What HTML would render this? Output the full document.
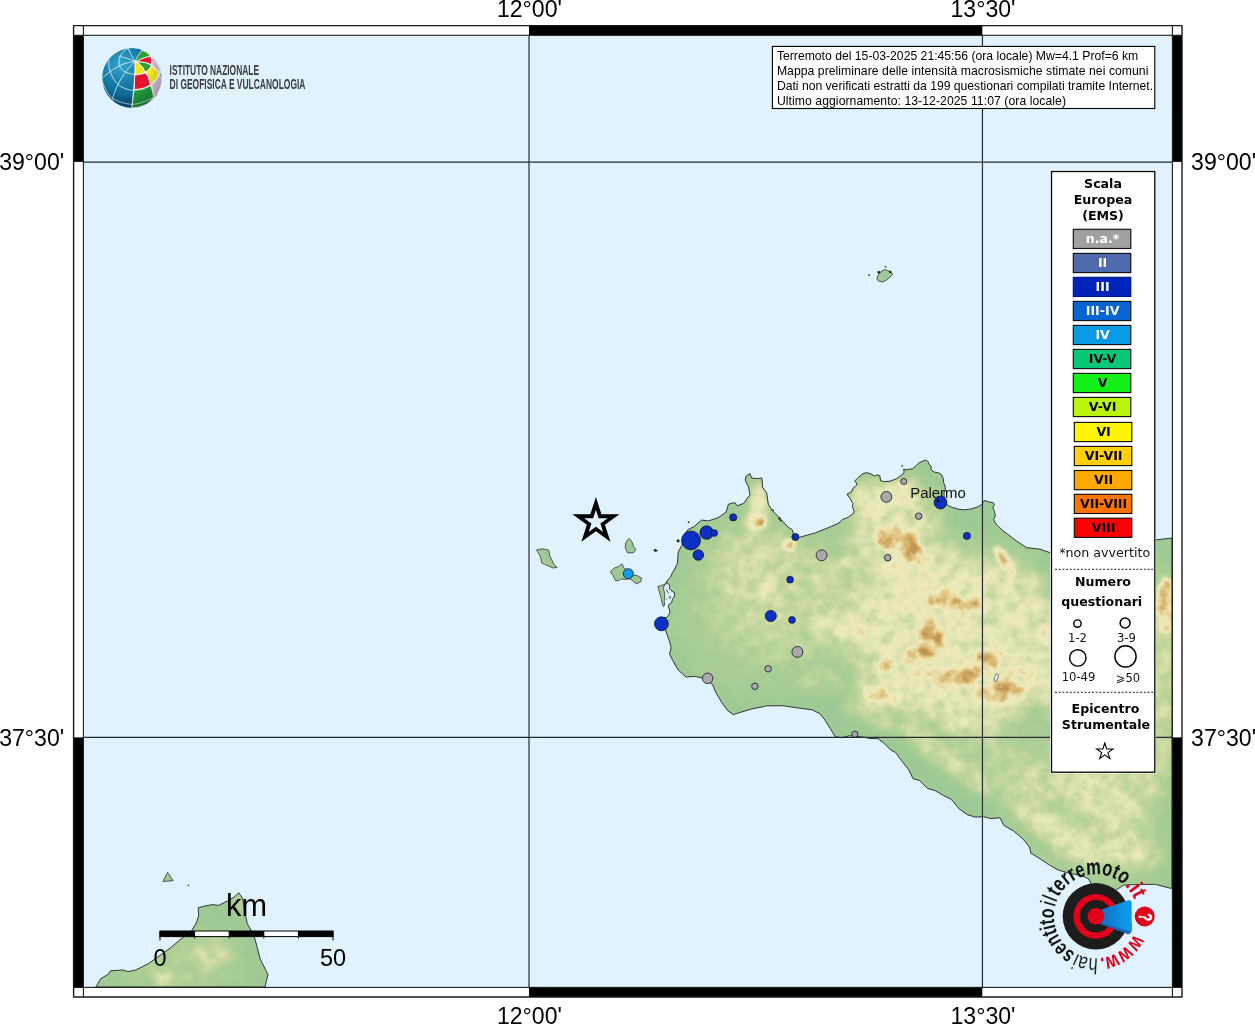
<!DOCTYPE html>
<html lang="it"><head><meta charset="utf-8"><title>Mappa intensità macrosismiche</title>
<style>html,body{margin:0;padding:0;background:#fff}svg{display:block;will-change:transform}.h{font-family:"Liberation Sans",sans-serif}.d{font-family:"DejaVu Sans","Liberation Sans",sans-serif}</style>
</head><body>
<svg width="1255" height="1024" viewBox="0 0 1255 1024">
<defs>
<clipPath id="mapclip"><rect x="83" y="35" width="1089.5" height="952"/></clipPath>
<clipPath id="landclip"><path d="M666.2 582.2 L667.9 579.8 L670.4 577.3 L672.3 572.9 L674.3 570.0 L677.5 563.1 L678.2 552.0 L681.8 545.6 L683.8 536.1 L687.8 529.7 L694.2 526.5 L701.4 520.1 L708.5 520.9 L718.1 517.7 L726.1 512.2 L728.4 504.2 L734.8 502.6 L737.2 505.8 L743.6 503.4 L750.0 494.6 L748.4 486.7 L745.2 480.3 L746.0 476.3 L750.0 473.6 L751.6 477.9 L757.1 478.7 L761.9 477.9 L762.7 487.5 L766.7 493.0 L768.3 504.2 L772.3 510.6 L780.2 518.5 L788.2 527.3 L792.2 529.7 L793.8 534.5 L799.4 537.3 L815.3 532.9 L831.2 526.5 L840.0 522.5 L840.0 521.8 L842.3 519.5 L847.8 517.5 L853.3 513.6 L854.1 511.3 L852.5 506.6 L852.9 503.4 L850.2 498.8 L847.0 494.1 L851.7 491.7 L852.5 488.6 L856.4 485.5 L856.8 483.1 L854.5 481.2 L858.0 477.7 L862.7 473.8 L866.6 472.6 L871.3 474.1 L874.4 476.1 L876.7 474.9 L879.8 475.7 L880.6 480.8 L884.5 481.6 L890.0 481.2 L896.3 478.8 L901.7 475.3 L904.1 472.2 L903.7 469.1 L906.4 469.8 L912.7 468.7 L915.0 466.7 L918.5 463.2 L922.9 461.0 L926.4 460.1 L928.2 461.9 L929.1 464.5 L931.3 466.3 L930.8 469.3 L934.3 472.0 L938.7 472.9 L941.4 474.6 L943.1 478.1 L943.6 482.5 L945.3 486.9 L945.3 490.4 L944.0 493.1 L944.5 500.0 L946.5 504.0 L947.5 505.4 L952.8 507.6 L958.9 509.3 L964.2 509.9 L971.2 508.9 L978.3 506.7 L981.8 504.5 L984.4 500.5 L988.8 501.9 L993.2 502.7 L994.5 504.5 L992.8 507.1 L994.5 511.5 L995.4 515.9 L993.7 519.4 L995.9 523.8 L999.4 527.3 L1002.9 530.9 L1005.0 532.2 L1007.3 534.0 L1016.9 541.2 L1026.5 547.6 L1040.0 549.2 L1051.0 553.0 L1100.0 548.0 L1155.0 540.0 L1172.0 538.0 L1172.0 888.0 L1171.2 888.4 L1155.3 884.4 L1139.4 884.4 L1123.4 885.2 L1118.6 888.4 L1113.9 891.6 L1097.9 890.0 L1091.6 884.4 L1088.4 878.8 L1082.0 875.6 L1069.2 873.2 L1058.1 870.0 L1048.5 864.5 L1039.0 858.1 L1031.0 853.3 L1029.4 846.9 L1023.0 839.0 L1013.5 831.0 L1003.9 825.4 L1000.0 817.8 L991.2 818.6 L983.3 816.7 L975.3 817.1 L967.3 814.7 L959.4 809.1 L951.4 799.5 L943.4 795.5 L935.5 790.8 L927.5 788.4 L919.5 780.4 L913.1 778.8 L908.4 769.2 L902.0 761.3 L895.6 752.5 L890.8 750.1 L884.5 743.7 L878.1 738.6 L870.1 738.6 L863.7 737.1 L849.4 735.8 L841.4 737.7 L835.1 736.6 L830.3 728.6 L824.9 720.0 L820.1 713.8 L812.1 709.8 L799.4 708.2 L783.4 705.8 L767.5 705.8 L751.6 709.0 L733.2 714.6 L727.6 710.6 L721.3 701.8 L715.7 692.3 L712.5 684.3 L702.2 677.9 L694.2 676.3 L686.2 677.1 L678.2 670.0 L672.7 660.4 L669.5 654.0 L671.1 647.6 L669.5 641.3 L665.5 630.1 L663.9 617.4 L666.5 617.6 L668.4 615.4 L669.9 612.5 L669.4 609.1 L668.4 607.1 L668.9 604.7 L671.6 602.7 L672.3 599.8 L673.8 597.3 L674.8 594.4 L673.8 592.0 L670.9 590.5 L669.4 588.6 L669.9 586.6 L668.9 584.2 L666.2 582.2 Z M95.9 987.0 L100.7 978.7 L108.7 973.9 L110.3 970.8 L123.0 970.0 L127.8 971.6 L135.8 970.0 L148.5 963.6 L159.7 955.6 L170.8 947.6 L182.0 938.1 L191.6 930.9 L196.3 922.9 L198.7 915.8 L198.2 907.8 L204.3 906.2 L212.3 904.6 L218.6 905.4 L228.2 900.6 L234.6 896.7 L238.6 892.7 L242.5 898.2 L244.9 912.6 L247.3 923.7 L253.7 934.9 L256.9 946.1 L260.1 958.8 L264.9 968.4 L268.0 974.7 L264.9 987.0 Z M536.6 549.9 L542.3 548.8 L548.7 550.1 L550.0 556.5 L553.8 564.1 L557.0 567.3 L553.1 568.0 L545.5 564.8 L541.7 562.9 L540.4 556.5 Z M629.0 538.4 L631.6 541.2 L633.5 546.3 L635.8 549.5 L633.5 552.7 L627.7 552.9 L625.2 547.6 L625.8 542.5 Z M610.3 571.8 L614.3 568.0 L618.2 566.7 L622.0 563.9 L623.9 568.0 L625.8 569.2 L632.2 575.0 L637.3 575.6 L641.8 578.2 L640.5 582.0 L636.0 583.9 L632.8 580.7 L629.6 578.8 L624.5 579.4 L620.7 578.8 L618.8 580.7 L615.6 580.7 L613.1 575.6 Z M877.5 271.9 L879.8 272.7 L883.0 270.3 L885.4 269.5 L887.8 270.7 L891.0 271.5 L892.6 274.3 L889.4 277.8 L886.2 280.2 L883.4 281.8 L879.0 281.4 L876.8 279.4 L877.8 275.9 L879.0 273.5 Z M162.9 881.5 L167.6 872.4 L173.2 880.7 Z M657.9 586.4 L661.1 585.6 L664.0 584.6 L666.2 582.5 L666.5 583.7 L663.8 586.1 L663.6 589.5 L664.8 593.9 L664.5 597.3 L664.3 601.7 L664.5 605.2 L663.3 606.6 L662.3 604.2 L661.4 599.3 L660.1 594.4 L658.7 589.5 Z"/></clipPath>
<filter id="terrain" filterUnits="userSpaceOnUse" x="80" y="30" width="1100" height="960" color-interpolation-filters="sRGB"><feGaussianBlur in="SourceGraphic" stdDeviation="0.6" result="elev"/><feTurbulence type="fractalNoise" baseFrequency="0.075" numOctaves="3" seed="7" result="nz"/><feColorMatrix in="nz" type="matrix" values="1 0 0 0 0  1 0 0 0 0  1 0 0 0 0  0 0 0 0 1" result="ng"/><feComposite in="elev" in2="ng" operator="arithmetic" k1="0.8" k2="0.6" k3="0.10" k4="-0.05" result="mix"/><feComponentTransfer in="mix"><feFuncR type="table" tableValues="0.620 0.633 0.647 0.661 0.675 0.706 0.737 0.769 0.807 0.844 0.882 0.907 0.931 0.932 0.917 0.902 0.875 0.848 0.820 0.792 0.765"/><feFuncG type="table" tableValues="0.792 0.797 0.802 0.807 0.812 0.822 0.833 0.843 0.860 0.877 0.894 0.906 0.917 0.897 0.856 0.816 0.766 0.716 0.670 0.629 0.588"/><feFuncB type="table" tableValues="0.588 0.588 0.588 0.588 0.588 0.599 0.609 0.620 0.646 0.672 0.698 0.718 0.737 0.704 0.637 0.569 0.513 0.457 0.405 0.359 0.314"/><feFuncA type="linear" slope="0" intercept="1"/></feComponentTransfer></filter>
<filter id="bl14" filterUnits="userSpaceOnUse" x="80" y="30" width="1100" height="960"><feGaussianBlur stdDeviation="14"/></filter>
<filter id="bl5" filterUnits="userSpaceOnUse" x="80" y="30" width="1100" height="960"><feGaussianBlur stdDeviation="5"/></filter>
<filter id="bl3" filterUnits="userSpaceOnUse" x="80" y="30" width="1100" height="960"><feGaussianBlur stdDeviation="2.5"/></filter>
</defs>
<rect width="1255" height="1024" fill="#fff"/>
<rect x="83" y="35" width="1089.5" height="952" fill="#e0f2fe"/>
<g clip-path="url(#mapclip)">
<g clip-path="url(#landclip)"><g filter="url(#terrain)">
<rect x="80" y="30" width="1100" height="960" fill="#000"/>
<g filter="url(#bl14)">
<ellipse cx="790.0" cy="600.0" rx="85.0" ry="58.0" transform="rotate(0 790.0 600.0)" fill="#fff" opacity="0.23"/>
<ellipse cx="765.0" cy="610.0" rx="95.0" ry="85.0" transform="rotate(0 765.0 610.0)" fill="#fff" opacity="0.16"/>
<ellipse cx="1100.0" cy="860.0" rx="70.0" ry="30.0" transform="rotate(10 1100.0 860.0)" fill="#fff" opacity="0.15"/>
<ellipse cx="960.0" cy="640.0" rx="112.0" ry="92.0" transform="rotate(0 960.0 640.0)" fill="#fff" opacity="0.5"/>
<ellipse cx="1122.0" cy="690.0" rx="72.0" ry="140.0" transform="rotate(0 1122.0 690.0)" fill="#fff" opacity="0.36"/>
<ellipse cx="895.0" cy="530.0" rx="48.0" ry="50.0" transform="rotate(0 895.0 530.0)" fill="#fff" opacity="0.5"/>
<ellipse cx="1075.0" cy="815.0" rx="90.0" ry="42.0" transform="rotate(25 1075.0 815.0)" fill="#fff" opacity="0.26"/>
<ellipse cx="1005.0" cy="760.0" rx="65.0" ry="30.0" transform="rotate(30 1005.0 760.0)" fill="#fff" opacity="0.26"/>
<ellipse cx="180.0" cy="965.0" rx="60.0" ry="30.0" transform="rotate(0 180.0 965.0)" fill="#fff" opacity="0.25"/>
<ellipse cx="745.0" cy="548.0" rx="45.0" ry="32.0" transform="rotate(0 745.0 548.0)" fill="#fff" opacity="0.2"/>
</g>
<g filter="url(#bl5)">
<ellipse cx="835.0" cy="628.0" rx="28.0" ry="9.0" transform="rotate(0 835.0 628.0)" fill="#fff" opacity="0.25"/>
<ellipse cx="767.0" cy="592.0" rx="13.0" ry="8.0" transform="rotate(-20 767.0 592.0)" fill="#fff" opacity="0.3"/>
<ellipse cx="820.0" cy="562.0" rx="9.0" ry="7.0" transform="rotate(0 820.0 562.0)" fill="#fff" opacity="0.25"/>
<ellipse cx="848.0" cy="562.0" rx="11.0" ry="7.0" transform="rotate(0 848.0 562.0)" fill="#fff" opacity="0.25"/>
<ellipse cx="758.6" cy="504.0" rx="9.5" ry="25.0" transform="rotate(0 758.6 504.0)" fill="#fff" opacity="0.6"/>
<ellipse cx="755.0" cy="523.0" rx="15.0" ry="6.5" transform="rotate(0 755.0 523.0)" fill="#fff" opacity="0.45"/>
<ellipse cx="870.0" cy="497.0" rx="22.0" ry="18.0" transform="rotate(0 870.0 497.0)" fill="#fff" opacity="0.32"/>
<ellipse cx="906.0" cy="490.0" rx="16.0" ry="12.0" transform="rotate(0 906.0 490.0)" fill="#fff" opacity="0.3"/>
<ellipse cx="876.0" cy="696.0" rx="24.0" ry="14.0" transform="rotate(20 876.0 696.0)" fill="#fff" opacity="0.3"/>
<ellipse cx="940.0" cy="600.0" rx="40.0" ry="25.0" transform="rotate(0 940.0 600.0)" fill="#fff" opacity="0.15"/>
<ellipse cx="935.0" cy="660.0" rx="45.0" ry="30.0" transform="rotate(0 935.0 660.0)" fill="#fff" opacity="0.15"/>
<ellipse cx="1000.0" cy="680.0" rx="35.0" ry="25.0" transform="rotate(0 1000.0 680.0)" fill="#fff" opacity="0.15"/>
<ellipse cx="945.0" cy="759.0" rx="60.0" ry="12.0" transform="rotate(36.6 945.0 759.0)" fill="#fff" opacity="0.32"/>
<ellipse cx="1059.0" cy="835.0" rx="52.0" ry="12.0" transform="rotate(33.5 1059.0 835.0)" fill="#fff" opacity="0.3"/>
<ellipse cx="1135.0" cy="852.0" rx="32.0" ry="14.0" transform="rotate(5 1135.0 852.0)" fill="#fff" opacity="0.25"/>
<ellipse cx="868.0" cy="715.0" rx="30.0" ry="11.0" transform="rotate(30 868.0 715.0)" fill="#fff" opacity="0.28"/>
<ellipse cx="240.2" cy="903.0" rx="4.0" ry="9.0" transform="rotate(0 240.2 903.0)" fill="#fff" opacity="0.5"/>
<ellipse cx="163.0" cy="979.5" rx="8.0" ry="6.0" transform="rotate(0 163.0 979.5)" fill="#fff" opacity="0.55"/>
<ellipse cx="215.0" cy="950.0" rx="25.0" ry="18.0" transform="rotate(0 215.0 950.0)" fill="#fff" opacity="0.2"/>
<ellipse cx="822.0" cy="682.0" rx="26.0" ry="14.0" transform="rotate(10 822.0 682.0)" fill="#fff" opacity="0.2"/>
</g>
<g filter="url(#bl3)">
<ellipse cx="761.0" cy="523.0" rx="5.0" ry="5.0" transform="rotate(0 761.0 523.0)" fill="#fff" opacity="0.64"/>
<ellipse cx="789.0" cy="545.0" rx="6.2" ry="6.2" transform="rotate(0 789.0 545.0)" fill="#fff" opacity="0.64"/>
<ellipse cx="897.0" cy="541.0" rx="25.0" ry="12.5" transform="rotate(15 897.0 541.0)" fill="#fff" opacity="0.52"/>
<ellipse cx="912.0" cy="553.0" rx="11.2" ry="10.0" transform="rotate(0 912.0 553.0)" fill="#fff" opacity="0.49"/>
<ellipse cx="953.0" cy="602.0" rx="26.2" ry="7.5" transform="rotate(5 953.0 602.0)" fill="#fff" opacity="0.59"/>
<ellipse cx="931.0" cy="640.0" rx="11.2" ry="18.8" transform="rotate(10 931.0 640.0)" fill="#fff" opacity="0.64"/>
<ellipse cx="917.0" cy="654.0" rx="11.2" ry="7.5" transform="rotate(0 917.0 654.0)" fill="#fff" opacity="0.54"/>
<ellipse cx="887.0" cy="663.0" rx="10.0" ry="6.2" transform="rotate(-20 887.0 663.0)" fill="#fff" opacity="0.59"/>
<ellipse cx="958.0" cy="679.0" rx="28.8" ry="8.8" transform="rotate(-15 958.0 679.0)" fill="#fff" opacity="0.59"/>
<ellipse cx="1002.0" cy="692.0" rx="22.5" ry="11.2" transform="rotate(0 1002.0 692.0)" fill="#fff" opacity="0.54"/>
<ellipse cx="990.0" cy="657.0" rx="12.5" ry="10.0" transform="rotate(0 990.0 657.0)" fill="#fff" opacity="0.49"/>
<ellipse cx="1004.5" cy="560.5" rx="6.2" ry="17.5" transform="rotate(-35 1004.5 560.5)" fill="#fff" opacity="0.69"/>
<ellipse cx="1166.0" cy="604.0" rx="10.0" ry="27.5" transform="rotate(0 1166.0 604.0)" fill="#fff" opacity="0.64"/>
<ellipse cx="876.0" cy="694.0" rx="12.5" ry="7.5" transform="rotate(20 876.0 694.0)" fill="#fff" opacity="0.44"/>
<ellipse cx="545.0" cy="570.0" rx="3.8" ry="8.8" transform="rotate(-20 545.0 570.0)" fill="#fff" opacity="0.54"/>
</g>
</g></g>
<circle cx="669.9" cy="597.3" r="1.1" fill="#b5cf93" stroke="#333" stroke-width="0.5"/><path d="M666 589.6 L668.9 593.4" stroke="#333" stroke-width="0.9" fill="none"/><circle cx="666.3" cy="599" r="0.5" fill="#222"/>
<ellipse cx="996.2" cy="677.7" rx="1.7" ry="4.3" transform="rotate(18 996.2 677.7)" fill="#eaf6ff" stroke="#333" stroke-width="0.6"/>
<path d="M666.2 582.2 L667.9 579.8 L670.4 577.3 L672.3 572.9 L674.3 570.0 L677.5 563.1 L678.2 552.0 L681.8 545.6 L683.8 536.1 L687.8 529.7 L694.2 526.5 L701.4 520.1 L708.5 520.9 L718.1 517.7 L726.1 512.2 L728.4 504.2 L734.8 502.6 L737.2 505.8 L743.6 503.4 L750.0 494.6 L748.4 486.7 L745.2 480.3 L746.0 476.3 L750.0 473.6 L751.6 477.9 L757.1 478.7 L761.9 477.9 L762.7 487.5 L766.7 493.0 L768.3 504.2 L772.3 510.6 L780.2 518.5 L788.2 527.3 L792.2 529.7 L793.8 534.5 L799.4 537.3 L815.3 532.9 L831.2 526.5 L840.0 522.5 L840.0 521.8 L842.3 519.5 L847.8 517.5 L853.3 513.6 L854.1 511.3 L852.5 506.6 L852.9 503.4 L850.2 498.8 L847.0 494.1 L851.7 491.7 L852.5 488.6 L856.4 485.5 L856.8 483.1 L854.5 481.2 L858.0 477.7 L862.7 473.8 L866.6 472.6 L871.3 474.1 L874.4 476.1 L876.7 474.9 L879.8 475.7 L880.6 480.8 L884.5 481.6 L890.0 481.2 L896.3 478.8 L901.7 475.3 L904.1 472.2 L903.7 469.1 L906.4 469.8 L912.7 468.7 L915.0 466.7 L918.5 463.2 L922.9 461.0 L926.4 460.1 L928.2 461.9 L929.1 464.5 L931.3 466.3 L930.8 469.3 L934.3 472.0 L938.7 472.9 L941.4 474.6 L943.1 478.1 L943.6 482.5 L945.3 486.9 L945.3 490.4 L944.0 493.1 L944.5 500.0 L946.5 504.0 L947.5 505.4 L952.8 507.6 L958.9 509.3 L964.2 509.9 L971.2 508.9 L978.3 506.7 L981.8 504.5 L984.4 500.5 L988.8 501.9 L993.2 502.7 L994.5 504.5 L992.8 507.1 L994.5 511.5 L995.4 515.9 L993.7 519.4 L995.9 523.8 L999.4 527.3 L1002.9 530.9 L1005.0 532.2 L1007.3 534.0 L1016.9 541.2 L1026.5 547.6 L1040.0 549.2 L1051.0 553.0 L1100.0 548.0 L1155.0 540.0 L1172.0 538.0 L1172.0 888.0 L1171.2 888.4 L1155.3 884.4 L1139.4 884.4 L1123.4 885.2 L1118.6 888.4 L1113.9 891.6 L1097.9 890.0 L1091.6 884.4 L1088.4 878.8 L1082.0 875.6 L1069.2 873.2 L1058.1 870.0 L1048.5 864.5 L1039.0 858.1 L1031.0 853.3 L1029.4 846.9 L1023.0 839.0 L1013.5 831.0 L1003.9 825.4 L1000.0 817.8 L991.2 818.6 L983.3 816.7 L975.3 817.1 L967.3 814.7 L959.4 809.1 L951.4 799.5 L943.4 795.5 L935.5 790.8 L927.5 788.4 L919.5 780.4 L913.1 778.8 L908.4 769.2 L902.0 761.3 L895.6 752.5 L890.8 750.1 L884.5 743.7 L878.1 738.6 L870.1 738.6 L863.7 737.1 L849.4 735.8 L841.4 737.7 L835.1 736.6 L830.3 728.6 L824.9 720.0 L820.1 713.8 L812.1 709.8 L799.4 708.2 L783.4 705.8 L767.5 705.8 L751.6 709.0 L733.2 714.6 L727.6 710.6 L721.3 701.8 L715.7 692.3 L712.5 684.3 L702.2 677.9 L694.2 676.3 L686.2 677.1 L678.2 670.0 L672.7 660.4 L669.5 654.0 L671.1 647.6 L669.5 641.3 L665.5 630.1 L663.9 617.4 L666.5 617.6 L668.4 615.4 L669.9 612.5 L669.4 609.1 L668.4 607.1 L668.9 604.7 L671.6 602.7 L672.3 599.8 L673.8 597.3 L674.8 594.4 L673.8 592.0 L670.9 590.5 L669.4 588.6 L669.9 586.6 L668.9 584.2 L666.2 582.2 Z" fill="none" stroke="#222" stroke-width="0.9" stroke-linejoin="round"/>
<path d="M95.9 987.0 L100.7 978.7 L108.7 973.9 L110.3 970.8 L123.0 970.0 L127.8 971.6 L135.8 970.0 L148.5 963.6 L159.7 955.6 L170.8 947.6 L182.0 938.1 L191.6 930.9 L196.3 922.9 L198.7 915.8 L198.2 907.8 L204.3 906.2 L212.3 904.6 L218.6 905.4 L228.2 900.6 L234.6 896.7 L238.6 892.7 L242.5 898.2 L244.9 912.6 L247.3 923.7 L253.7 934.9 L256.9 946.1 L260.1 958.8 L264.9 968.4 L268.0 974.7 L264.9 987.0 Z" fill="none" stroke="#222" stroke-width="0.9"/>
<path d="M536.6 549.9 L542.3 548.8 L548.7 550.1 L550.0 556.5 L553.8 564.1 L557.0 567.3 L553.1 568.0 L545.5 564.8 L541.7 562.9 L540.4 556.5 Z" fill="none" stroke="#333" stroke-width="0.8" stroke-linejoin="round"/>
<path d="M629.0 538.4 L631.6 541.2 L633.5 546.3 L635.8 549.5 L633.5 552.7 L627.7 552.9 L625.2 547.6 L625.8 542.5 Z" fill="none" stroke="#333" stroke-width="0.8" stroke-linejoin="round"/>
<path d="M610.3 571.8 L614.3 568.0 L618.2 566.7 L622.0 563.9 L623.9 568.0 L625.8 569.2 L632.2 575.0 L637.3 575.6 L641.8 578.2 L640.5 582.0 L636.0 583.9 L632.8 580.7 L629.6 578.8 L624.5 579.4 L620.7 578.8 L618.8 580.7 L615.6 580.7 L613.1 575.6 Z" fill="none" stroke="#333" stroke-width="0.8" stroke-linejoin="round"/>
<path d="M877.5 271.9 L879.8 272.7 L883.0 270.3 L885.4 269.5 L887.8 270.7 L891.0 271.5 L892.6 274.3 L889.4 277.8 L886.2 280.2 L883.4 281.8 L879.0 281.4 L876.8 279.4 L877.8 275.9 L879.0 273.5 Z" fill="none" stroke="#333" stroke-width="0.8" stroke-linejoin="round"/>
<path d="M162.9 881.5 L167.6 872.4 L173.2 880.7 Z" fill="none" stroke="#333" stroke-width="0.8" stroke-linejoin="round"/>
<path d="M657.9 586.4 L661.1 585.6 L664.0 584.6 L666.2 582.5 L666.5 583.7 L663.8 586.1 L663.6 589.5 L664.8 593.9 L664.5 597.3 L664.3 601.7 L664.5 605.2 L663.3 606.6 L662.3 604.2 L661.4 599.3 L660.1 594.4 L658.7 589.5 Z" fill="none" stroke="#333" stroke-width="0.8" stroke-linejoin="round"/>
<circle cx="902.1" cy="465.9" r="0.8" fill="#222"/>
<circle cx="869.1" cy="275.1" r="0.9" fill="#222"/>
<circle cx="885.4" cy="266.7" r="0.8" fill="#222"/>
<circle cx="879.0" cy="272.3" r="1.3" fill="#222"/>
<circle cx="890.2" cy="272.0" r="1.2" fill="#222"/>
<circle cx="688.6" cy="522.2" r="0.9" fill="#222"/>
<circle cx="678.0" cy="540.8" r="1.5" fill="#222"/>
<circle cx="655.1" cy="550.4" r="1.4" fill="#222"/>
<circle cx="656.8" cy="550.6" r="0.9" fill="#222"/>
<circle cx="773.0" cy="510.2" r="0.9" fill="#222"/>
<circle cx="779.5" cy="518.5" r="1.2" fill="#222"/>
<circle cx="780.8" cy="520.6" r="0.9" fill="#222"/>
<circle cx="188.4" cy="885.2" r="0.8" fill="#222"/>
<circle cx="678.6" cy="541.6" r="0.8" fill="#222"/>
</g>
<line x1="529.00" y1="35.3" x2="529.00" y2="987.4" stroke="#252b31" stroke-width="1.2"/>
<line x1="982.45" y1="35.3" x2="982.45" y2="987.4" stroke="#252b31" stroke-width="1.2"/>
<line x1="83.4" y1="162.10" x2="1172.4" y2="162.10" stroke="#252b31" stroke-width="1.2"/>
<line x1="83.4" y1="737.40" x2="1172.4" y2="737.40" stroke="#252b31" stroke-width="1.2"/>
<path d="M73.6 25.6 H1182.0 V997.0 H73.6 Z M83.4 35.3 V987.4 H1172.4 V35.3 Z" fill="#fff" fill-rule="evenodd"/>
<rect x="529.0" y="25.6" width="453.3" height="9.7" fill="#000"/>
<rect x="529.0" y="987.4" width="453.3" height="9.6" fill="#000"/>
<rect x="73.6" y="35.3" width="9.8" height="126.6" fill="#000"/>
<rect x="73.6" y="737.4" width="9.8" height="250.0" fill="#000"/>
<rect x="1172.4" y="35.3" width="9.6" height="126.6" fill="#000"/>
<rect x="1172.4" y="737.4" width="9.6" height="250.0" fill="#000"/>
<rect x="73.6" y="25.6" width="1108.4" height="971.4" fill="none" stroke="#1a1a1a" stroke-width="1.4" stroke-linejoin="round"/>
<rect x="83.4" y="35.3" width="1089.0" height="952.1" fill="none" stroke="#1a1a1a" stroke-width="1.1"/>
<line x1="83.4" y1="25.6" x2="83.4" y2="35.3" stroke="#1a1a1a" stroke-width="1.1"/>
<line x1="1172.4" y1="25.6" x2="1172.4" y2="35.3" stroke="#1a1a1a" stroke-width="1.1"/>
<line x1="83.4" y1="987.4" x2="83.4" y2="997.0" stroke="#1a1a1a" stroke-width="1.1"/>
<line x1="1172.4" y1="987.4" x2="1172.4" y2="997.0" stroke="#1a1a1a" stroke-width="1.1"/>
<line x1="73.6" y1="35.3" x2="83.4" y2="35.3" stroke="#1a1a1a" stroke-width="1.1"/>
<line x1="73.6" y1="987.4" x2="83.4" y2="987.4" stroke="#1a1a1a" stroke-width="1.1"/>
<line x1="1172.4" y1="35.3" x2="1182.0" y2="35.3" stroke="#1a1a1a" stroke-width="1.1"/>
<line x1="1172.4" y1="987.4" x2="1182.0" y2="987.4" stroke="#1a1a1a" stroke-width="1.1"/>
<g class="h" font-size="23.1" fill="#000">
<text x="529.4" y="16.8" text-anchor="middle">12°00'</text>
<text x="983" y="16.8" text-anchor="middle">13°30'</text>
<text x="529.4" y="1023.6" text-anchor="middle">12°00'</text>
<text x="983" y="1023.6" text-anchor="middle">13°30'</text>
<text x="64.2" y="170.2" text-anchor="end">39°00'</text>
<text x="64.2" y="745.7" text-anchor="end">37°30'</text>
<text x="1191.1" y="170.2">39°00'</text>
<text x="1191.1" y="745.7">37°30'</text>
</g>
<text class="h" x="910.3" y="497.9" font-size="14.9" fill="#111">Palermo</text>
<circle cx="691.0" cy="540.4" r="9.45" fill="#0b30c6" stroke="#10142a" stroke-width="0.8"/>
<circle cx="706.6" cy="532.6" r="6.75" fill="#0b30c6" stroke="#10142a" stroke-width="0.8"/>
<circle cx="714.2" cy="533.0" r="3.35" fill="#0b30c6" stroke="#10142a" stroke-width="0.8"/>
<circle cx="698.3" cy="555.0" r="5.25" fill="#0b30c6" stroke="#10142a" stroke-width="0.8"/>
<circle cx="733.2" cy="517.4" r="3.55" fill="#0b30c6" stroke="#10142a" stroke-width="0.8"/>
<circle cx="795.4" cy="537.0" r="3.55" fill="#0b30c6" stroke="#10142a" stroke-width="0.8"/>
<circle cx="821.6" cy="555.3" r="5.45" fill="#a9a9a9" stroke="#10142a" stroke-width="0.8"/>
<circle cx="790.1" cy="579.7" r="3.35" fill="#0b30c6" stroke="#10142a" stroke-width="0.8"/>
<circle cx="770.8" cy="616.0" r="5.55" fill="#0b30c6" stroke="#10142a" stroke-width="0.8"/>
<circle cx="792.0" cy="619.9" r="3.35" fill="#0b30c6" stroke="#10142a" stroke-width="0.8"/>
<circle cx="797.4" cy="651.9" r="5.45" fill="#a9a9a9" stroke="#10142a" stroke-width="0.8"/>
<circle cx="768.1" cy="668.8" r="3.25" fill="#a9a9a9" stroke="#10142a" stroke-width="0.8"/>
<circle cx="707.6" cy="678.3" r="5.25" fill="#a9a9a9" stroke="#10142a" stroke-width="0.8"/>
<circle cx="754.9" cy="686.3" r="3.25" fill="#a9a9a9" stroke="#10142a" stroke-width="0.8"/>
<circle cx="661.4" cy="623.8" r="6.95" fill="#0b30c6" stroke="#10142a" stroke-width="0.8"/>
<circle cx="886.4" cy="496.9" r="5.45" fill="#a9a9a9" stroke="#10142a" stroke-width="0.8"/>
<circle cx="903.8" cy="481.5" r="3.05" fill="#a9a9a9" stroke="#10142a" stroke-width="0.8"/>
<circle cx="918.7" cy="516.2" r="3.25" fill="#a9a9a9" stroke="#10142a" stroke-width="0.8"/>
<circle cx="887.7" cy="557.7" r="3.25" fill="#a9a9a9" stroke="#10142a" stroke-width="0.8"/>
<circle cx="966.9" cy="535.9" r="3.55" fill="#0b30c6" stroke="#10142a" stroke-width="0.8"/>
<circle cx="854.9" cy="734.2" r="3.05" fill="#a9a9a9" stroke="#10142a" stroke-width="0.8"/>
<circle cx="628.3" cy="573.7" r="5.05" fill="#0f9be6" stroke="#10142a" stroke-width="0.8"/>
<circle cx="940.5" cy="502.5" r="6.4" fill="#0b30c6" stroke="#10142a" stroke-width="0.8"/>
<path d="M935.9 501.9 L938 499 L940.1 501.9 Z" fill="#000"/>
<polygon points="595.90,497.10 601.46,514.20 619.44,514.20 604.89,524.77 610.45,541.87 595.90,531.30 581.35,541.87 586.91,524.77 572.36,514.20 590.34,514.20" fill="#000"/>
<polygon points="595.90,509.65 598.66,518.15 607.60,518.15 600.37,523.40 603.13,531.90 595.90,526.65 588.67,531.90 591.43,523.40 584.20,518.15 593.14,518.15" fill="#e0f2fe"/>
<rect x="160.0" y="931" width="173.0" height="5.6" fill="#fff"/>
<rect x="160.0" y="931" width="34.6" height="5.6" fill="#000"/>
<rect x="229.2" y="931" width="34.6" height="5.6" fill="#000"/>
<rect x="298.4" y="931" width="34.6" height="5.6" fill="#000"/>
<rect x="160.0" y="931" width="173.0" height="5.6" fill="none" stroke="#000" stroke-width="1"/>
<line x1="160.0" y1="931" x2="160.0" y2="940.5" stroke="#000" stroke-width="1"/>
<line x1="194.6" y1="931" x2="194.6" y2="938.5" stroke="#000" stroke-width="1"/>
<line x1="229.2" y1="931" x2="229.2" y2="938.5" stroke="#000" stroke-width="1"/>
<line x1="263.8" y1="931" x2="263.8" y2="938.5" stroke="#000" stroke-width="1"/>
<line x1="298.4" y1="931" x2="298.4" y2="938.5" stroke="#000" stroke-width="1"/>
<line x1="333.0" y1="931" x2="333.0" y2="940.5" stroke="#000" stroke-width="1"/>
<g class="h" font-size="25" fill="#000"><text x="246.5" y="915.6" text-anchor="middle" font-size="30.7">km</text><text x="160" y="965.5" text-anchor="middle" font-size="23.5">0</text><text x="333" y="965.5" text-anchor="middle" font-size="23.5">50</text></g>
<rect x="772.4" y="46.4" width="382.4" height="62.1" fill="#fff" stroke="#000" stroke-width="1.1"/>
<g class="h" font-size="12.2" fill="#000">
<text x="776.9" y="59.5" textLength="361.3" lengthAdjust="spacing">Terremoto del 15-03-2025 21:45:56 (ora locale) Mw=4.1 Prof=6 km</text>
<text x="776.9" y="74.5" textLength="371.5" lengthAdjust="spacing">Mappa preliminare delle intensità macrosismiche stimate nei comuni</text>
<text x="776.9" y="89.6" textLength="376.2" lengthAdjust="spacing">Dati non verificati estratti da 199 questionari compilati tramite Internet.</text>
<text x="776.9" y="104.6" textLength="289.1" lengthAdjust="spacing">Ultimo aggiornamento: 13-12-2025 11:07 (ora locale)</text>
</g>
<rect x="1050" y="170" width="106" height="603.5" fill="#fff"/>
<rect x="1051.5" y="171.5" width="103.3" height="600.7" fill="#fff" stroke="#000" stroke-width="1.3"/>
<g class="d" font-weight="bold" font-size="12.6" text-anchor="middle" fill="#000">
<text x="1103" y="187.9">Scala</text><text x="1103" y="203.8">Europea</text><text x="1103" y="220">(EMS)</text>
<rect x="1073.3" y="229.3" width="57.5" height="19.2" fill="#a0a0a0" stroke="#111" stroke-width="1.15"/>
<text x="1102.6" y="243.0" fill="#fff">n.a.*</text>
<rect x="1073.3" y="253.4" width="57.5" height="19.2" fill="#4f69ad" stroke="#111" stroke-width="1.15"/>
<text x="1102.6" y="267.1" fill="#fff">II</text>
<rect x="1073.3" y="277.3" width="57.5" height="19.2" fill="#0023b9" stroke="#00168c" stroke-width="1.15"/>
<text x="1102.6" y="291.0" fill="#fff">III</text>
<rect x="1073.3" y="301.4" width="57.5" height="19.2" fill="#0765d1" stroke="#111" stroke-width="1.15"/>
<text x="1102.6" y="315.1" fill="#fff">III-IV</text>
<rect x="1073.3" y="325.4" width="57.5" height="19.2" fill="#0a9be6" stroke="#111" stroke-width="1.15"/>
<text x="1102.6" y="339.1" fill="#fff">IV</text>
<rect x="1073.3" y="349.4" width="57.5" height="19.2" fill="#08c878" stroke="#111" stroke-width="1.15"/>
<text x="1102.6" y="363.1" fill="#000">IV-V</text>
<rect x="1073.3" y="373.4" width="57.5" height="19.2" fill="#12f018" stroke="#111" stroke-width="1.15"/>
<text x="1102.6" y="387.1" fill="#000">V</text>
<rect x="1073.3" y="397.4" width="57.5" height="19.2" fill="#b9f60c" stroke="#111" stroke-width="1.15"/>
<text x="1102.6" y="411.1" fill="#000">V-VI</text>
<rect x="1074.3" y="422.4" width="57.5" height="19.2" fill="#fff500" stroke="#111" stroke-width="1.15"/>
<text x="1103.6" y="436.1" fill="#000">VI</text>
<rect x="1074.3" y="446.4" width="57.5" height="19.2" fill="#ffcf0a" stroke="#111" stroke-width="1.15"/>
<text x="1103.6" y="460.1" fill="#000">VI-VII</text>
<rect x="1074.3" y="470.5" width="57.5" height="19.2" fill="#ffa800" stroke="#111" stroke-width="1.15"/>
<text x="1103.6" y="484.2" fill="#000">VII</text>
<rect x="1074.3" y="494.3" width="57.5" height="19.2" fill="#ff7300" stroke="#111" stroke-width="1.15"/>
<text x="1103.6" y="508.0" fill="#000">VII-VIII</text>
<rect x="1074.3" y="518.2" width="57.5" height="19.2" fill="#ff0000" stroke="#111" stroke-width="1.15"/>
<text x="1103.6" y="531.9" fill="#000">VIII</text>
<text x="1103" y="585.7">Numero</text><text x="1101.7" y="605.8">questionari</text>
<text x="1105.5" y="712.8">Epicentro</text><text x="1106" y="728.7">Strumentale</text>
</g>
<g class="d" font-size="12.65" fill="#111"><text x="1059.2" y="556.8">*non avvertito</text></g>
<line x1="1055" y1="569.3" x2="1153" y2="569.3" stroke="#000" stroke-width="0.9" stroke-dasharray="2 1.7"/>
<line x1="1055" y1="692.3" x2="1153" y2="692.3" stroke="#000" stroke-width="0.9" stroke-dasharray="2 1.7"/>
<circle cx="1077.5" cy="623.6" r="3.7" fill="#fff" stroke="#000" stroke-width="1.45"/>
<circle cx="1125.1" cy="623.0" r="5.0" fill="#fff" stroke="#000" stroke-width="1.45"/>
<circle cx="1077.8" cy="657.9" r="8.2" fill="#fff" stroke="#000" stroke-width="1.45"/>
<circle cx="1125.5" cy="656.4" r="10.6" fill="#fff" stroke="#000" stroke-width="1.45"/>
<g class="d" font-size="11.6" text-anchor="middle" fill="#111"><text x="1077.5" y="641.8">1-2</text><text x="1126.5" y="641.8">3-9</text><text x="1078.5" y="681">10-49</text><text x="1128" y="681.5">⩾50</text></g>
<polygon points="1104.80,743.00 1106.73,748.94 1112.98,748.94 1107.92,752.62 1109.85,758.56 1104.80,754.88 1099.75,758.56 1101.68,752.62 1096.62,748.94 1102.87,748.94" fill="#fff" stroke="#000" stroke-width="1.1" stroke-linejoin="miter"/>
<defs><radialGradient id="gb" cx="0.32" cy="0.28" r="0.8"><stop offset="0" stop-color="#34a8cc"/><stop offset="0.45" stop-color="#1278a4"/><stop offset="1" stop-color="#064c77"/></radialGradient><radialGradient id="gsh" cx="0.4" cy="0.35" r="0.7"><stop offset="0.6" stop-color="#000" stop-opacity="0"/><stop offset="1" stop-color="#000" stop-opacity="0.28"/></radialGradient><clipPath id="gclip"><circle cx="132" cy="78" r="30"/></clipPath></defs>
<g clip-path="url(#gclip)">
<circle cx="132" cy="78" r="30" fill="url(#gb)"/>
<path d="M 134.93 61.61 L 141.89 49.89 L 168.26 47.33 L 168.26 113.26 L 131.63 108.50 C 134.56 83.96 135.44 69.30 134.93 61.61 Z" fill="#fff"/>
<path d="M134.9 61.6 L138.2 55.4 L141.9 50.3 L146.3 52.1 L149.2 54.5 L150.8 56.7 L146.3 57.0 L141.9 58.7 L137.5 60.9 Z" fill="#2ea037" stroke="#fff" stroke-width="0.7" stroke-linejoin="round"/>
<path d="M149.2 54.5 L151.8 56.8 L150.8 56.7 Z" fill="#f4e21b" stroke="#fff" stroke-width="0.7" stroke-linejoin="round"/>
<path d="M136.0 61.6 L141.9 58.9 L146.3 57.2 L150.8 56.8 L151.8 60.5 L151.4 64.5 L146.3 62.7 L140.4 61.8 Z" fill="#e5132b" stroke="#fff" stroke-width="0.7" stroke-linejoin="round"/>
<path d="M151.8 57.2 L156.5 62.0 L159.8 69.3 L159.5 72.2 L155.8 68.9 L152.1 65.6 L151.8 61.2 Z" fill="#d6c3d6" stroke="#fff" stroke-width="0.7" stroke-linejoin="round"/>
<path d="M136.9 62.3 L141.9 62.1 L146.3 62.9 L151.4 65.3 L149.2 69.3 L146.3 71.6 L144.8 71.9 L142.6 67.3 L139.7 64.2 Z" fill="#2ea037" stroke="#fff" stroke-width="0.7" stroke-linejoin="round"/>
<path d="M135.1 62.9 L136.8 62.6 L139.7 64.5 L142.6 67.5 L145.0 72.2 L140.4 74.1 L135.1 74.4 Z" fill="#f4e21b" stroke="#fff" stroke-width="0.7" stroke-linejoin="round"/>
<path d="M146.3 72.0 L149.6 69.3 L151.8 66.2 L155.8 69.3 L158.7 73.0 L156.9 78.1 L151.4 84.0 L149.6 79.9 L148.1 75.9 Z" fill="#f4e21b" stroke="#fff" stroke-width="0.7" stroke-linejoin="round"/>
<path d="M134.6 75.0 L140.4 74.4 L145.5 73.0 L148.1 76.6 L150.3 84.7 L146.3 86.9 L142.6 88.4 L134.2 89.8 Z" fill="#e5132b" stroke="#fff" stroke-width="0.7" stroke-linejoin="round"/>
<path d="M133.8 90.5 L142.6 89.1 L150.7 85.8 L152.5 91.3 L153.6 97.1 L149.9 101.5 L146.3 104.5 L139.0 107.0 L132.0 107.8 L132.9 98.6 Z" fill="#1f9a3c" stroke="#fff" stroke-width="0.7" stroke-linejoin="round"/>
<path d="M151.8 84.7 L157.3 78.8 L159.5 75.2 L161.3 78.1 L161.7 81.0 L160.6 86.9 L158.0 92.0 L154.3 95.7 L152.9 90.5 Z" fill="#d6c3d6" stroke="#fff" stroke-width="0.7" stroke-linejoin="round"/>
<path d="M159.8 72.6 L161.3 74.4 L162.0 77.7 L160.9 77.0 L159.8 74.8 Z" fill="#2ea037" stroke="#fff" stroke-width="0.7" stroke-linejoin="round"/>
<path d="M154.3 96.4 L158.4 92.0 L157.6 94.6 L155.4 97.1 Z" fill="#e5132b" stroke="#fff" stroke-width="0.7" stroke-linejoin="round"/>
<path d="M 134.93 61.61 Q 131.63 56.12 127.97 48.21" fill="none" stroke="#fff" stroke-width="0.75" stroke-linecap="round" opacity="0.95"/>
<path d="M 134.93 61.61 C 127.23 62.34 116.98 64.18 101.96 78.46" fill="none" stroke="#fff" stroke-width="0.75" stroke-linecap="round" opacity="0.95"/>
<path d="M 134.93 61.61 C 124.30 70.77 116.25 85.42 112.22 99.34" fill="none" stroke="#fff" stroke-width="0.75" stroke-linecap="round" opacity="0.95"/>
<path d="M 134.93 61.61 C 128.70 58.68 124.30 57.22 119.91 56.70" fill="none" stroke="#fff" stroke-width="0.75" stroke-linecap="round" opacity="0.95"/>
<path d="M 127.97 48.64 C 122.11 50.99 118.08 56.85 119.18 64.18 C 119.91 69.30 124.30 73.33 134.93 74.43" fill="none" stroke="#fff" stroke-width="0.75" stroke-linecap="round" opacity="0.95"/>
<path d="M 108.92 60.51 C 107.45 69.30 113.32 81.03 119.18 85.42 C 124.30 89.08 129.43 90.18 133.97 90.55" fill="none" stroke="#fff" stroke-width="0.75" stroke-linecap="round" opacity="0.95"/>
<path d="M 101.96 79.56 C 104.52 89.82 109.65 96.41 112.58 98.61 C 119.18 102.27 125.77 103.88 132.36 104.47 C 138.96 103.88 147.75 101.17 153.97 96.78" fill="none" stroke="#fff" stroke-width="0.75" stroke-linecap="round" opacity="0.95"/>
<path d="M 134.93 61.61 C 135.44 69.30 134.56 83.96 131.63 108.13" fill="none" stroke="#fff" stroke-width="0.75" stroke-linecap="round" opacity="0.95"/>
<circle cx="132" cy="78" r="30" fill="url(#gsh)"/>
</g>
<g class="h" font-weight="bold" font-size="14.4" fill="#3a3a3c"><text x="169.6" y="75.0" textLength="89.4" lengthAdjust="spacingAndGlyphs">ISTITUTO NAZIONALE</text><text x="169.6" y="89.35" textLength="135.8" lengthAdjust="spacingAndGlyphs">DI GEOFISICA E VULCANOLOGIA</text></g>
<defs><path id="hcirc" d="M1137.90 916.30 A42.00 42.00 0 1 1 1053.90 916.30 A42.00 42.00 0 1 1 1137.90 916.30"/>
<linearGradient id="hblue" x1="0" y1="0" x2="1" y2="0"><stop offset="0" stop-color="#1766bd"/><stop offset="0.55" stop-color="#1187d8"/><stop offset="1" stop-color="#0a9fe9"/></linearGradient></defs>
<circle cx="1095.9" cy="916.3" r="33.2" fill="#1d1d1b"/>
<circle cx="1095.9" cy="916.3" r="19.3" fill="none" stroke="#e2001a" stroke-width="6.2"/>
<path d="M1096.6 922.2 L1128.2 933.8 L1130.4 932.8 L1131.2 930.4 L1131.2 923.8 L1098.5 918.5 Z" fill="#1565b8" stroke="#1565b8" stroke-width="1" stroke-linejoin="round"/>
<path d="M1095.9 912.1 L1127.8 900.9 L1129.9 900.6 L1131.1 902.1 L1131.2 929.1 L1129.5 930.7 L1096.6 920.5 Z" fill="url(#hblue)" stroke="url(#hblue)" stroke-width="1" stroke-linejoin="round"/>
<circle cx="1095.9" cy="916.3" r="8.3" fill="#e2001a"/>
<circle cx="1144.7" cy="916.5" r="10.0" fill="#e2001a"/>
<text class="h" font-weight="bold" font-size="17.5" fill="#fff" text-anchor="middle" transform="translate(1144.7 916.5) rotate(90)" x="0.8" y="6.0" textLength="8" lengthAdjust="spacingAndGlyphs" stroke="#fff" stroke-width="0.5">?</text>
<g class="h" font-size="22">
<text font-weight="bold" fill="#e2001a" textLength="44.0" lengthAdjust="spacingAndGlyphs"><textPath href="#hcirc" startOffset="18.3" textLength="44.0" lengthAdjust="spacingAndGlyphs">www.</textPath></text>
<text font-weight="normal" fill="#1d1d1b" textLength="22.0" lengthAdjust="spacingAndGlyphs"><textPath href="#hcirc" startOffset="63.8" textLength="22.0" lengthAdjust="spacingAndGlyphs">hai</textPath></text>
<text font-weight="bold" fill="#111" textLength="52.0" lengthAdjust="spacingAndGlyphs"><textPath href="#hcirc" startOffset="87.2" textLength="52.0" lengthAdjust="spacingAndGlyphs">sentito</textPath></text>
<text font-weight="normal" fill="#1d1d1b" textLength="9.2" lengthAdjust="spacingAndGlyphs"><textPath href="#hcirc" startOffset="140.7" textLength="9.2" lengthAdjust="spacingAndGlyphs">il</textPath></text>
<text font-weight="bold" fill="#111" textLength="77.0" lengthAdjust="spacingAndGlyphs"><textPath href="#hcirc" startOffset="151.4" textLength="77.0" lengthAdjust="spacingAndGlyphs">terremoto</textPath></text>
<text font-weight="bold" fill="#e2001a" textLength="17.2" lengthAdjust="spacingAndGlyphs"><textPath href="#hcirc" startOffset="229.1" textLength="17.2" lengthAdjust="spacingAndGlyphs">.it</textPath></text>
</g>
</svg></body></html>
